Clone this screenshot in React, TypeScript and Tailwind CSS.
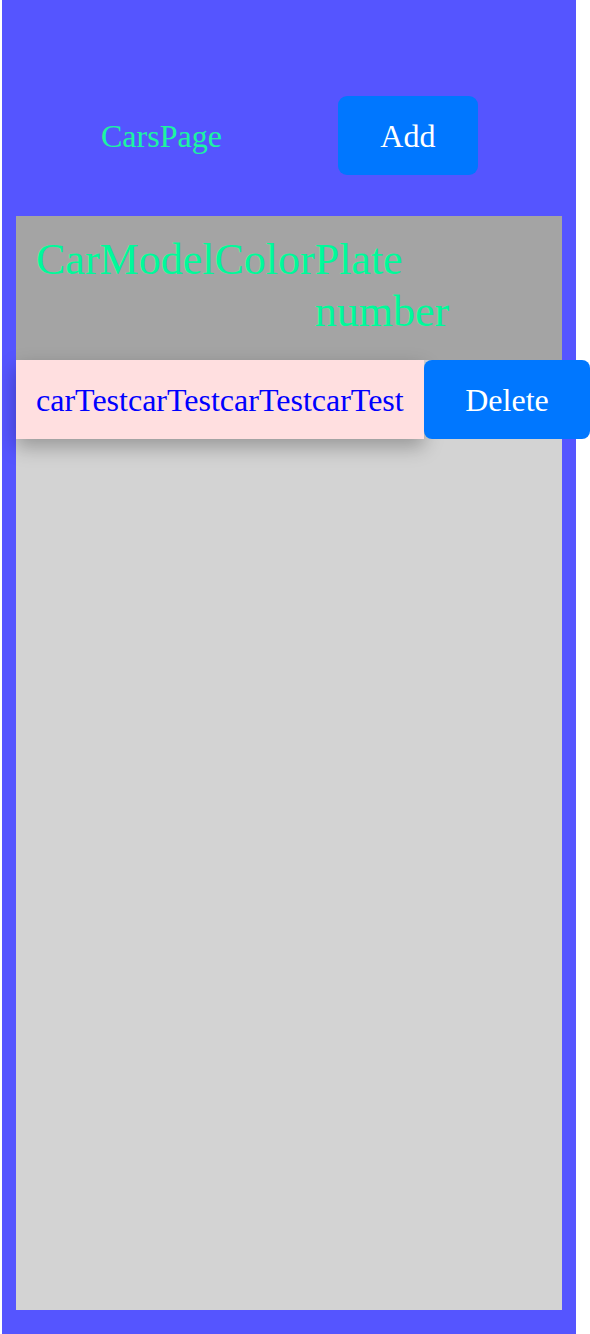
import React from 'react';

const cars = [{ car: 'car', model: 'Test', color: 'car', plate: 'Test' }];

export default function App() {
    return (
        <div className="min-h-screen bg-white font-['Liberation_Serif','Times_New_Roman',serif]">
            <div className="ml-[2px] w-[574px] h-[1334px] bg-[#5555ff] flex flex-col px-[14px] pb-[24px]">
                {/* Header */}
                <header className="h-[216px] pt-[96px]">
                    <div className="flex items-center h-[79px]">
                        <span className="ml-[85px] text-[32px] text-[#1cf5a0]">CarsPage</span>
                        <button className="ml-[116px] w-[140px] h-[79px] rounded-[9px] bg-[#0077ff] text-white text-[32px]">
                            Add
                        </button>
                    </div>
                </header>

                {/* Table */}
                <main className="flex-1 bg-[#d3d3d3] flex flex-col">
                    <div className="h-[144px] bg-[#a4a4a4] px-[20px] pt-[18px] flex items-start text-[44px] leading-[52px] text-[#00fa9a]">
                        <span>Car</span>
                        <span>Model</span>
                        <span>Color</span>
                        <span className="w-min">Plate number</span>
                    </div>

                    {cars.map((c, i) => (
                        <div key={i} className="flex h-[79px]">
                            <div className="w-[408px] shrink-0 bg-[#ffdfe0] px-[20px] flex items-center text-[32px] text-[#0000ff] shadow-[0_8px_18px_rgba(0,0,0,0.28)]">
                                <span>{c.car}</span>
                                <span>{c.model}</span>
                                <span>{c.color}</span>
                                <span>{c.plate}</span>
                                <span>{c.car}</span>
                                <span>{c.model}</span>
                                <span>{c.color}</span>
                                <span>{c.plate}</span>
                            </div>
                            <button className="w-[166px] shrink-0 rounded-[8px] bg-[#0077ff] text-white text-[32px]">
                                Delete
                            </button>
                        </div>
                    ))}
                </main>
            </div>
        </div>
    );
}
